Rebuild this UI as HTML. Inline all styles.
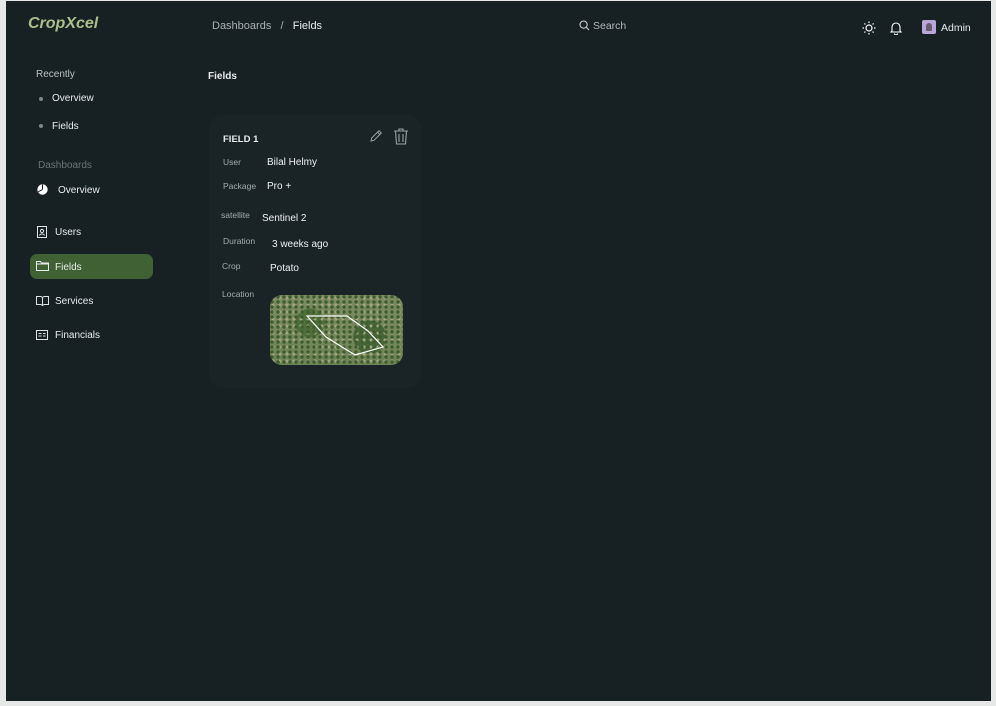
<!DOCTYPE html>
<html><head><meta charset="utf-8"><style>
*{margin:0;padding:0;box-sizing:border-box}
body{width:996px;height:706px;background:#e6e7e7;font-family:"Liberation Sans",sans-serif;position:relative;overflow:hidden;color:#e8ecec}
.app{position:absolute;left:6px;top:1px;width:985px;height:700px;background:#172023}
.t{position:absolute;white-space:nowrap}
.logo{left:22px;top:14px;font-size:16px;font-weight:bold;font-style:italic;color:#a9c08a}
.crumb{font-size:11px;color:#a8b0b2}
.sb{font-size:10.5px}
.lbl{font-size:8.5px;color:#a3abad}
.val{font-size:10px;color:#eef1f1}
.card{position:absolute;left:203px;top:114px;width:212px;height:273px;background:#1a2427;border-radius:14px}
.active{position:absolute;left:24px;top:253px;width:123px;height:25px;background:#3f6133;border-radius:7px}
.map{position:absolute;left:264px;top:294px;width:133px;height:70px;border-radius:12px;overflow:hidden;
background:
radial-gradient(circle at 2px 2px,#3f5e2e 1.5px,transparent 2px) 0 0/6px 5px,
radial-gradient(circle at 3px 3px,#a4a584 1.3px,transparent 1.8px) 0 0/7px 7px,
radial-gradient(circle at 30% 40%,#4e6f3a 0 14px,transparent 15px),
radial-gradient(circle at 75% 60%,#466637 0 16px,transparent 17px),
linear-gradient(#7d8c62,#6f8456);}
</style></head><body>
<div class="app">
<div class="t logo">CropXcel</div>
<div class="t crumb" style="left:206px;top:19px">Dashboards &nbsp;&nbsp;<span style="color:#a8b0b2">/</span>&nbsp;&nbsp; <span style="color:#e8ecec">Fields</span></div>
<svg style="position:absolute;left:573px;top:19px" width="11" height="11" viewBox="0 0 11 11" fill="none" stroke="#c8cdce" stroke-width="1.1"><circle cx="4.6" cy="4.6" r="3.6"/><path d="M7.3 7.3L10 10"/></svg>
<div class="t crumb" style="left:587px;top:19px;font-size:10.5px;color:#b0b7b9">Search</div>
<svg style="position:absolute;left:856px;top:20px" width="14" height="14" viewBox="0 0 14 14" fill="none" stroke="#fff" stroke-width="1.2"><circle cx="7" cy="7" r="3"/><path d="M7 0.5v1.5M7 12v1.5M0.5 7H2M12 7h1.5M2.4 2.4l1 1M10.6 10.6l1 1M2.4 11.6l1-1M10.6 3.4l1-1"/></svg>
<svg style="position:absolute;left:884px;top:20px" width="12" height="14" viewBox="0 0 12 14" fill="none" stroke="#fff" stroke-width="1.1"><path d="M2 10V6a4 4 0 0 1 8 0v4l1 1H1z"/><path d="M4.5 12.5a1.5 1.5 0 0 0 3 0"/></svg>
<div style="position:absolute;left:916px;top:19px;width:14px;height:14px;background:#b9a6d8;border-radius:2px"><div style="margin:3px 4px;width:6px;height:8px;background:#6a5a72;border-radius:3px 3px 1px 1px"></div></div>
<div class="t" style="left:935px;top:21px;font-size:10.5px">Admin</div>

<div class="t sb" style="left:30px;top:68px;color:#b9c0c2;font-size:10px">Recently</div>
<div style="position:absolute;left:33px;top:96px;width:4px;height:4px;border-radius:50%;background:#7d8788"></div>
<div class="t sb" style="left:46px;top:92px;font-size:10px">Overview</div>
<div style="position:absolute;left:33px;top:123px;width:4px;height:4px;border-radius:50%;background:#7d8788"></div>
<div class="t sb" style="left:46px;top:120px;font-size:10px">Fields</div>
<div class="t sb" style="left:32px;top:159px;color:#6b7476;font-size:10px">Dashboards</div>
<svg style="position:absolute;left:31px;top:183px" width="11" height="11" viewBox="0 0 11 11"><circle cx="5.5" cy="5.5" r="5.2" fill="#fff"/><path d="M5.5 5.5V0.5M5.5 5.5L1 8" stroke="#172023" stroke-width="1"/></svg>
<div class="t sb" style="left:52px;top:184px;font-size:10px">Overview</div>
<svg style="position:absolute;left:31px;top:225px" width="10" height="12" viewBox="0 0 10 12" fill="none" stroke="#dfe3e3" stroke-width="1"><rect x="0.5" y="0.5" width="9" height="11"/><circle cx="5" cy="5" r="1.6"/><path d="M2.5 9.5c0.5-2 4.5-2 5 0"/></svg>
<div class="t sb" style="left:49px;top:226px;font-size:10px">Users</div>
<div class="active"></div>
<svg style="position:absolute;left:30px;top:260px" width="13" height="10" viewBox="0 0 13 10" fill="none" stroke="#e8ecec" stroke-width="1"><path d="M0.5 0.5h4l1 1.5h7v7.5H0.5z M0.5 3h12"/></svg>
<div class="t sb" style="left:49px;top:261px;font-size:10px">Fields</div>
<svg style="position:absolute;left:30px;top:295px" width="13" height="10" viewBox="0 0 13 10" fill="none" stroke="#dfe3e3" stroke-width="1"><path d="M0.5 0.5h4.5l1.5 1v8l-1.5-1H0.5zM12.5 0.5H8l-1.5 1v8L8 8.5h4.5z"/></svg>
<div class="t sb" style="left:49px;top:295px;font-size:10px">Services</div>
<svg style="position:absolute;left:30px;top:329px" width="12" height="10" viewBox="0 0 12 10" fill="none" stroke="#dfe3e3" stroke-width="1"><rect x="0.5" y="0.5" width="11" height="9"/><path d="M2.5 3.5h3M2.5 6h3M7 3.5h2.5M7 6h2.5"/></svg>
<div class="t sb" style="left:49px;top:329px;font-size:10px">Financials</div>

<div class="t" style="left:202px;top:70px;font-size:10px;font-weight:bold">Fields</div>
<div class="card"></div>
<div class="t" style="left:217px;top:133px;font-size:9.5px;font-weight:bold">FIELD 1</div>
<svg style="position:absolute;left:363px;top:128px" width="14" height="14" viewBox="0 0 14 14" fill="none" stroke="#9aa2a4" stroke-width="1"><path d="M2 12l0.7-3L10 1.7l2.3 2.3L5 11.3z M8.5 3.2l2.3 2.3"/></svg>
<svg style="position:absolute;left:387px;top:127px" width="16" height="17" viewBox="0 0 16 17" fill="none" stroke="#9aa2a4" stroke-width="1.1"><path d="M1 3h14M6 3V1h4v2M2.5 3l1 13h9l1-13M6 6v8M10 6v8"/></svg>
<div class="t lbl" style="left:217px;top:156px">User</div><div class="t val" style="left:261px;top:156px">Bilal Helmy</div>
<div class="t lbl" style="left:217px;top:180px">Package</div><div class="t val" style="left:261px;top:180px">Pro +</div>
<div class="t lbl" style="left:215px;top:209px">satellite</div><div class="t val" style="left:256px;top:212px">Sentinel 2</div>
<div class="t lbl" style="left:217px;top:235px">Duration</div><div class="t val" style="left:266px;top:238px">3 weeks ago</div>
<div class="t lbl" style="left:216px;top:260px">Crop</div><div class="t val" style="left:264px;top:262px">Potato</div>
<div class="t lbl" style="left:216px;top:288px">Location</div>
<div class="map"><svg width="133" height="70" style="position:absolute;left:0;top:0"><path d="M37 21L77 21L98 36L113 52L85 60L56 42Z" fill="none" stroke="#fff" stroke-width="1.2"/></svg></div>
</div>
</body></html>
